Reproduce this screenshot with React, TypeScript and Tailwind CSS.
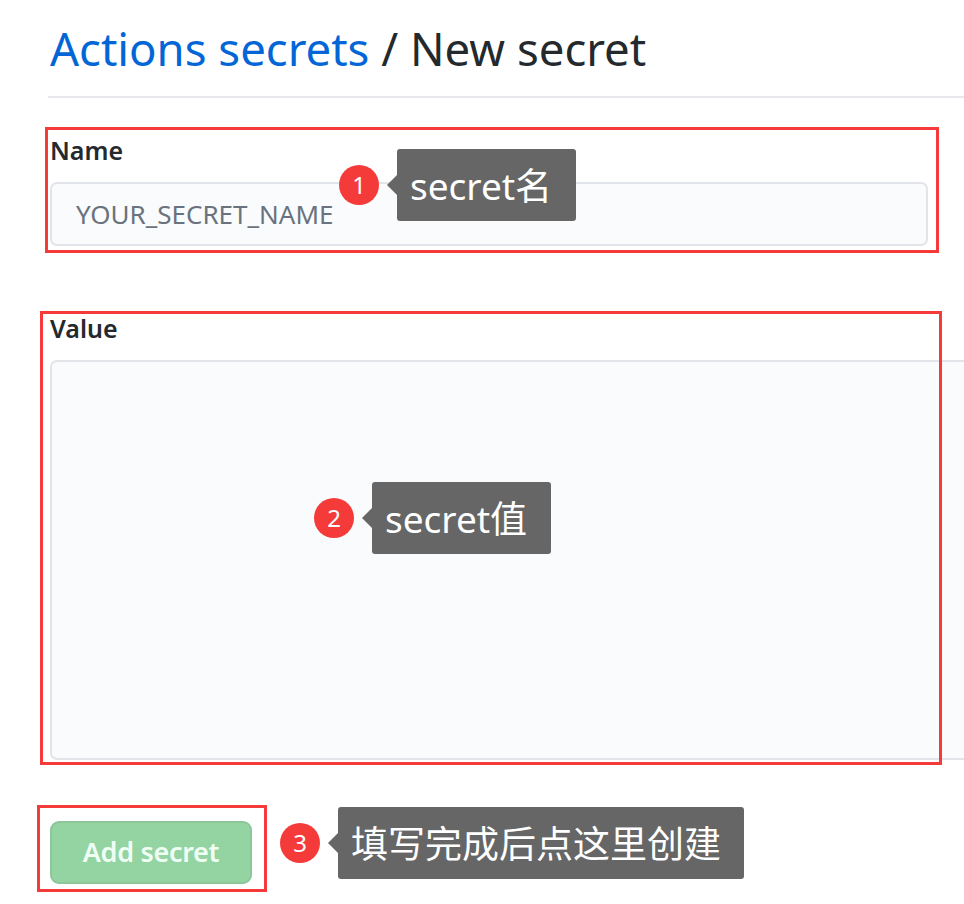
import React from 'react';

const font = { fontFamily: '"Noto Sans", "Noto Sans CJK SC", sans-serif' };

// numbered red dot + dark callout with a little arrow on its left
const Callout = ({ n, text, boxClass, className = '' }: { n: number, text: string, boxClass: string, className?: string }) => (
    <div className={`flex items-center ${className}`}>
        <div className="w-[40px] h-[40px] rounded-full bg-[#f53a3a] text-white text-[24px] leading-none flex items-center justify-center">{n}</div>
        <div className={`ml-[18px] relative h-[72px] pl-[13px] bg-[#666666] rounded-[3px] flex items-center text-white text-[37px] leading-none ${boxClass}`}>
            <span className="absolute left-[-10px] top-[26px] w-0 h-0 border-y-[10px] border-y-transparent border-r-[10px] border-r-[#666666]" />
            {text}
        </div>
    </div>
);

const App: React.FC = () => {
    return (
        <div className="relative z-0 w-[964px] h-[904px] overflow-hidden bg-white pl-[48px] pt-[20px]" style={font}>
            <h1 className="text-[45.5px] leading-[56px] font-normal text-[#24292e] pl-[2px]">
                <span className="text-[#0366d6]">Actions secrets</span> / New secret
            </h1>
            <div className="mt-[20px] h-[2px] bg-[#e6e8eb]" />

            {/* Name */}
            <div className="relative mt-[29px] -ml-[3px] w-[894px] border-[3px] border-[#f53a3a] pl-[2px] pt-[4px] pb-[4px]">
                <label className="block text-[25px] leading-[32px] font-semibold text-[#24292e]">Name</label>
                <div className="mt-[16px] w-[878px] h-[64px] rounded-[7px] border-2 border-[#e1e4e8] bg-[#fafbfc] flex items-center pl-[24px] text-[26px] text-[#6a737d]">
                    YOUR_SECRET_NAME
                </div>
                <Callout n={1} text="secret名" boxClass="w-[179px]" className="absolute left-[291px] top-[19px]" />
            </div>

            {/* Value */}
            <div className="relative mt-[58px] -ml-[8px] w-[902px] border-[3px] border-[#f53a3a] pl-[7px] pb-[2px]">
                <label className="block text-[25px] leading-[28px] font-semibold text-[#24292e]">Value</label>
                <div className="relative -z-10 mt-[18px] w-[960px] h-[400px] rounded-[7px] border-2 border-[#e1e4e8] bg-[#fafbfc]" />
                <Callout n={2} text="secret值" boxClass="w-[179px]" className="absolute left-[271px] top-[168px]" />
            </div>

            {/* Submit */}
            <div className="mt-[40px] -ml-[11px] flex items-start">
                <div className="w-[230px] border-[3px] border-[#f53a3a] pl-[10px] pt-[13px] pb-[5px]">
                    <button className="w-[202px] h-[63px] rounded-[9px] border-2 border-[#8cc79a] bg-[#94d3a2] text-[27px] font-semibold tracking-[-0.3px] text-[#f0fff4]">
                        Add secret
                    </button>
                </div>
                <Callout n={3} text="填写完成后点这里创建" boxClass="w-[406px]" className="ml-[13px] mt-[2px]" />
            </div>
        </div>
    );
};

export default App;
